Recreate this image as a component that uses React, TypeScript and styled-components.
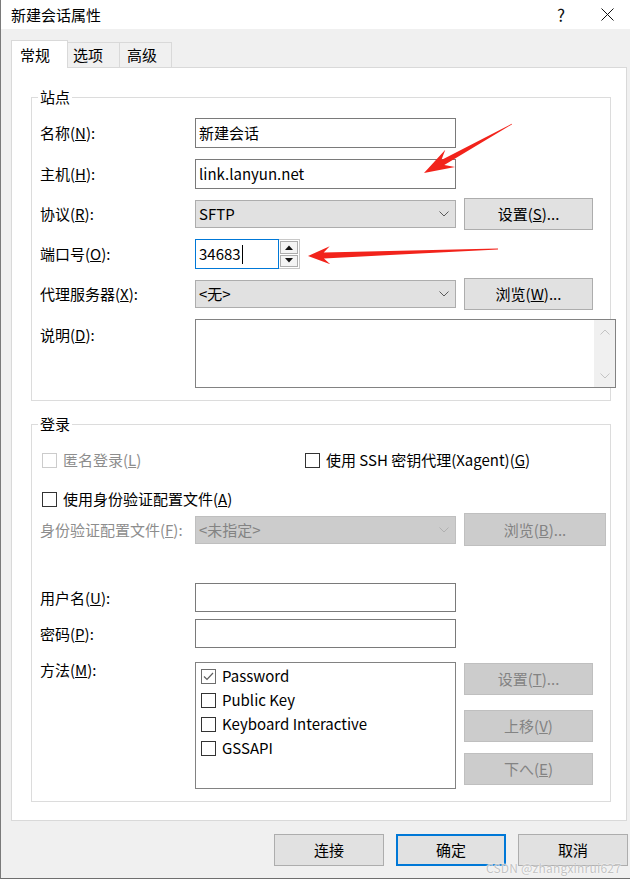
import React from 'react';
import styled, { createGlobalStyle } from 'styled-components';

const FONT = `"Noto Sans CJK SC", "Noto Sans", "Liberation Sans", sans-serif`;

const GlobalStyle = createGlobalStyle`
  * { box-sizing: border-box; }
  body {
    margin: 0;
    background: #f0f0f0;
    font-family: ${FONT};
  }
`;

const Window = styled.div`
  position: relative;
  width: 630px;
  height: 879px;
  background: #f0f0f0;
  border-left: 1px solid #7a7a7a;
  border-bottom: 1px solid #6e6e6e;
  font-family: ${FONT};
  font-size: 15px;
  color: #000;
  display: flex;
  flex-direction: column;
  overflow: hidden;
`;

const TitleBar = styled.div`
  flex: none;
  height: 29px;
  background: #fff;
  display: flex;
  align-items: center;
  padding-left: 10px;
`;

const TitleText = styled.span`
  flex: 1;
  line-height: 20px;
`;

const TitleButton = styled.div<{ $w: number }>`
  width: ${p => p.$w}px;
  height: 29px;
  display: flex;
  align-items: center;
  justify-content: center;
  font-size: 17px;
  color: #111;
`;

const Body = styled.div`
  flex: 1;
  display: flex;
  flex-direction: column;
  padding: 11px 3px 0 10px;
`;

const TabStrip = styled.div`
  position: relative;
  z-index: 1;
  display: flex;
  align-items: flex-end;
  height: 28px;
  margin-bottom: -1px;
`;

const Tab = styled.div<{ $active?: boolean; $w: number; $pl: number }>`
  width: ${p => p.$w}px;
  height: ${p => (p.$active ? 28 : 26)}px;
  margin-left: ${p => (p.$active ? 0 : -1)}px;
  padding-left: ${p => p.$pl}px;
  background: ${p => (p.$active ? '#fff' : '#f0f0f0')};
  border: 1px solid #d9d9d9;
  border-bottom: ${p => (p.$active ? 'none' : '1px solid #d9d9d9')};
  line-height: ${p => (p.$active ? 27 : 24)}px;
`;

const TabPanel = styled.div`
  background: #fff;
  border: 1px solid #d9d9d9;
  padding: 19px 15px 18px 19px;
`;

const GroupBox = styled.fieldset<{ $mt?: number }>`
  margin: ${p => p.$mt ?? 0}px 0 0;
  padding: 0 0 12px 8px;
  border: 1px solid #dcdcdc;
  min-width: 0;
`;

const Legend = styled.legend`
  padding: 0 2px;
  margin-left: -2px;
  line-height: 20px;
`;

const FormRow = styled.div<{ $mt: number; $h: number }>`
  display: flex;
  align-items: center;
  margin-top: ${p => p.$mt}px;
  height: ${p => p.$h}px;
`;

const FieldLabel = styled.div<{ $disabled?: boolean; $top?: number }>`
  flex: none;
  width: 155px;
  line-height: 20px;
  color: ${p => (p.$disabled ? '#8d8d8d' : '#000')};
  align-self: ${p => (p.$top !== undefined ? 'flex-start' : 'center')};
  margin-top: ${p => p.$top ?? 0}px;
`;

const TextBox = styled.div<{ $w?: number; $focused?: boolean }>`
  width: ${p => p.$w ?? 261}px;
  height: 100%;
  background: #fff;
  border: 1px solid ${p => (p.$focused ? '#0078d7' : '#7a7a7a')};
  padding-left: 3px;
  display: flex;
  align-items: center;
  line-height: 20px;
  white-space: nowrap;
`;

const Caret = styled.span`
  display: inline-block;
  width: 1px;
  height: 19px;
  background: #000;
  margin-left: 1px;
`;

const Combo = styled.div<{ $disabled?: boolean }>`
  width: 261px;
  height: 28px;
  background: ${p => (p.$disabled ? '#cccccc' : '#e1e1e1')};
  border: 1px solid ${p => (p.$disabled ? '#bfbfbf' : '#adadad')};
  color: ${p => (p.$disabled ? '#838383' : '#000')};
  display: flex;
  align-items: center;
  justify-content: space-between;
  padding: 0 6px 0 3px;
  line-height: 20px;
`;

const PushButton = styled.button<{ $w?: number; $h?: number; $mt?: number; $ml?: number; $default?: boolean }>`
  flex: none;
  width: ${p => p.$w ?? 129}px;
  height: ${p => p.$h ?? 32}px;
  margin: ${p => p.$mt ?? 0}px 0 0 ${p => p.$ml ?? 0}px;
  padding: 0;
  font: inherit;
  font-size: 15px;
  line-height: 20px;
  color: #000;
  background: #e1e1e1;
  border: ${p => (p.$default ? '2px solid #0078d7' : '1px solid #adadad')};
  &:disabled {
    background: #cccccc;
    border-color: #bfbfbf;
    color: #838383;
  }
`;

const PortField = styled.div`
  display: flex;
  height: 30px;
`;

const Spinner = styled.div`
  width: 21px;
  height: 30px;
  border: 1px solid #c8c8c8;
  border-left: none;
  display: flex;
  flex-direction: column;
  gap: 1px;
  padding: 1px;
  background: #fff;
`;

const SpinButton = styled.div`
  flex: 1;
  background: #f4f4f4;
  border: 1px solid #adadad;
  display: flex;
  align-items: center;
  justify-content: center;
`;

const Memo = styled.div`
  flex: none;
  width: 421px;
  height: 69px;
  background: #fff;
  border: 1px solid #828282;
  display: flex;
  justify-content: flex-end;
`;

const ScrollBar = styled.div`
  width: 21px;
  background: #f0f0f0;
  display: flex;
  flex-direction: column;
  justify-content: space-between;
  align-items: center;
  padding: 9px 0 8px;
`;

const CheckItem = styled.div<{ $w?: number; $ml?: number; $disabled?: boolean }>`
  display: flex;
  align-items: center;
  gap: 6px;
  width: ${p => (p.$w ? `${p.$w}px` : 'auto')};
  margin-left: ${p => p.$ml ?? 0}px;
  line-height: 20px;
  color: ${p => (p.$disabled ? '#8d8d8d' : '#000')};
  white-space: nowrap;
`;

const Box = styled.span<{ $disabled?: boolean; $soft?: boolean }>`
  flex: none;
  width: 15px;
  height: 15px;
  background: #fff;
  border: 1px solid ${p => (p.$disabled ? '#cccccc' : p.$soft ? '#6d6d6d' : '#333')};
  display: flex;
  align-items: center;
  justify-content: center;
`;

const ListBox = styled.div`
  flex: none;
  width: 261px;
  height: 127px;
  background: #fff;
  border: 1px solid #828282;
  padding: 1px 0 0 5px;
`;

const ListItem = styled(CheckItem)`
  height: 24px;
`;

const SideButtons = styled.div`
  align-self: flex-start;
  display: flex;
  flex-direction: column;
  margin-left: 8px;
`;

const ButtonBar = styled.div`
  display: flex;
  justify-content: flex-end;
  gap: 12px;
  margin: 13px -1px 0 0;
`;

const Overlay = styled.svg`
  position: absolute;
  left: 0;
  top: 0;
  pointer-events: none;
`;

const Watermark = styled.div`
  position: absolute;
  right: 9px;
  top: 859px;
  font-family: ${FONT};
  font-size: 12px;
  color: #c2c2c2;
  text-shadow: 0 0 2px #fff, 0 0 1px #fff;
  letter-spacing: 0.2px;
`;

const Chevron = ({ up, color = '#5a5a5a' }: { up?: boolean; color?: string }) => (
  <svg width="10" height="6" viewBox="0 0 10 6">
    <polyline
      points={up ? '0.5,5.5 5,1 9.5,5.5' : '0.5,0.5 5,5 9.5,0.5'}
      fill="none"
      stroke={color}
      strokeWidth="1"
    />
  </svg>
);

const Triangle = ({ up }: { up?: boolean }) => (
  <svg width="8" height="5" viewBox="0 0 8 5">
    <polygon points={up ? '0,5 4,0.5 8,5' : '0,0 8,0 4,4.5'} fill="#111" />
  </svg>
);

const CheckMark = () => (
  <svg width="11" height="9" viewBox="0 0 11 9">
    <polyline points="1,4.5 4,7.5 10,1" fill="none" stroke="#5e5e5e" strokeWidth="1.2" />
  </svg>
);

const arrowPoints = (tx: number, ty: number, px: number, py: number, head: number, half: number, shaft: number) => {
  const len = Math.hypot(px - tx, py - ty);
  const ux = (px - tx) / len;
  const uy = (py - ty) / len;
  const nx = -uy;
  const ny = ux;
  const bx = px - ux * head * 0.72;
  const by = py - uy * head * 0.72;
  const wx = px - ux * head;
  const wy = py - uy * head;
  return [
    [tx + nx * 0.4, ty + ny * 0.4],
    [bx + nx * shaft, by + ny * shaft],
    [wx + nx * half, wy + ny * half],
    [px, py],
    [wx - nx * half, wy - ny * half],
    [bx - nx * shaft, by - ny * shaft],
    [tx - nx * 0.4, ty - ny * 0.4],
  ]
    .map(pt => pt.map(v => v.toFixed(1)).join(','))
    .join(' ');
};

const Mn = ({ children }: { children: string }) => <u>{children}</u>;

const App = () => {
  return (
    <>
      <GlobalStyle />
      <Window>
        <TitleBar>
          <TitleText>新建会话属性</TitleText>
          <TitleButton $w={46}>?</TitleButton>
          <TitleButton $w={46}>
            <svg width="13" height="13" viewBox="0 0 13 13">
              <path d="M0.5 0.5 L12.5 12.5 M12.5 0.5 L0.5 12.5" stroke="#111" strokeWidth="1" />
            </svg>
          </TitleButton>
        </TitleBar>

        <Body>
          <TabStrip>
            <Tab $active $w={57} $pl={8}>常规</Tab>
            <Tab $w={53} $pl={5}>选项</Tab>
            <Tab $w={53} $pl={7}>高级</Tab>
          </TabStrip>

          <TabPanel>
            <GroupBox>
              <Legend>站点</Legend>
              <FormRow $mt={11} $h={30}>
                <FieldLabel>名称(<Mn>N</Mn>):</FieldLabel>
                <TextBox>新建会话</TextBox>
              </FormRow>
              <FormRow $mt={11} $h={30}>
                <FieldLabel>主机(<Mn>H</Mn>):</FieldLabel>
                <TextBox>link.lanyun.net</TextBox>
              </FormRow>
              <FormRow $mt={9} $h={32}>
                <FieldLabel>协议(<Mn>R</Mn>):</FieldLabel>
                <Combo>
                  <span>SFTP</span>
                  <Chevron />
                </Combo>
                <PushButton $ml={8}>设置(<Mn>S</Mn>)...</PushButton>
              </FormRow>
              <FormRow $mt={9} $h={30}>
                <FieldLabel>端口号(<Mn>O</Mn>):</FieldLabel>
                <PortField>
                  <TextBox $w={84} $focused>
                    <span>34683</span>
                    <Caret />
                  </TextBox>
                  <Spinner>
                    <SpinButton>
                      <Triangle up />
                    </SpinButton>
                    <SpinButton>
                      <Triangle />
                    </SpinButton>
                  </Spinner>
                </PortField>
              </FormRow>
              <FormRow $mt={9} $h={32}>
                <FieldLabel>代理服务器(<Mn>X</Mn>):</FieldLabel>
                <Combo>
                  <span>&lt;无&gt;</span>
                  <Chevron />
                </Combo>
                <PushButton $ml={8}>浏览(<Mn>W</Mn>)...</PushButton>
              </FormRow>
              <FormRow $mt={9} $h={69}>
                <FieldLabel $top={6}>说明(<Mn>D</Mn>):</FieldLabel>
                <Memo>
                  <ScrollBar>
                    <Chevron up color="#c4c4c4" />
                    <Chevron color="#c4c4c4" />
                  </ScrollBar>
                </Memo>
              </FormRow>
            </GroupBox>

            <GroupBox $mt={13}>
              <Legend>登录</Legend>
              <FormRow $mt={16} $h={20}>
                <CheckItem $w={263} $ml={2} $disabled>
                  <Box $disabled />
                  <span>匿名登录(<Mn>L</Mn>)</span>
                </CheckItem>
                <CheckItem>
                  <Box />
                  <span>使用 SSH 密钥代理(Xagent)(<Mn>G</Mn>)</span>
                </CheckItem>
              </FormRow>
              <FormRow $mt={19} $h={20}>
                <CheckItem $ml={2}>
                  <Box />
                  <span>使用身份验证配置文件(<Mn>A</Mn>)</span>
                </CheckItem>
              </FormRow>
              <FormRow $mt={4} $h={33}>
                <FieldLabel $disabled>身份验证配置文件(<Mn>F</Mn>):</FieldLabel>
                <Combo $disabled>
                  <span>&lt;未指定&gt;</span>
                  <Chevron color="#b0b0b0" />
                </Combo>
                <PushButton $ml={8} $w={142} $h={33} disabled>
                  浏览(<Mn>B</Mn>)...
                </PushButton>
              </FormRow>
              <FormRow $mt={37} $h={29}>
                <FieldLabel>用户名(<Mn>U</Mn>):</FieldLabel>
                <TextBox />
              </FormRow>
              <FormRow $mt={7} $h={29}>
                <FieldLabel>密码(<Mn>P</Mn>):</FieldLabel>
                <TextBox />
              </FormRow>
              <FormRow $mt={14} $h={127}>
                <FieldLabel $top={-2}>方法(<Mn>M</Mn>):</FieldLabel>
                <ListBox>
                  <ListItem>
                    <Box $soft>
                      <CheckMark />
                    </Box>
                    <span>Password</span>
                  </ListItem>
                  <ListItem>
                    <Box />
                    <span>Public Key</span>
                  </ListItem>
                  <ListItem>
                    <Box />
                    <span>Keyboard Interactive</span>
                  </ListItem>
                  <ListItem>
                    <Box />
                    <span>GSSAPI</span>
                  </ListItem>
                </ListBox>
                <SideButtons>
                  <PushButton $mt={1} disabled>
                    设置(<Mn>T</Mn>)...
                  </PushButton>
                  <PushButton $mt={15} disabled>
                    上移(<Mn>V</Mn>)
                  </PushButton>
                  <PushButton $mt={11} disabled>
                    下へ(<Mn>E</Mn>)
                  </PushButton>
                </SideButtons>
              </FormRow>
            </GroupBox>
          </TabPanel>

          <ButtonBar>
            <PushButton $w={110}>连接</PushButton>
            <PushButton $w={110} $default>
              确定
            </PushButton>
            <PushButton $w={110}>取消</PushButton>
          </ButtonBar>
        </Body>

        <Overlay width="630" height="879" viewBox="0 0 630 879">
          <polygon points={arrowPoints(511, 124, 423, 173, 30, 10, 3)} fill="#f2231b" />
          <polygon points={arrowPoints(497, 249, 307, 256, 22, 9, 3)} fill="#f2231b" />
        </Overlay>
        <Watermark>CSDN @zhangxinrui627</Watermark>
      </Window>
    </>
  );
};

export default App;
